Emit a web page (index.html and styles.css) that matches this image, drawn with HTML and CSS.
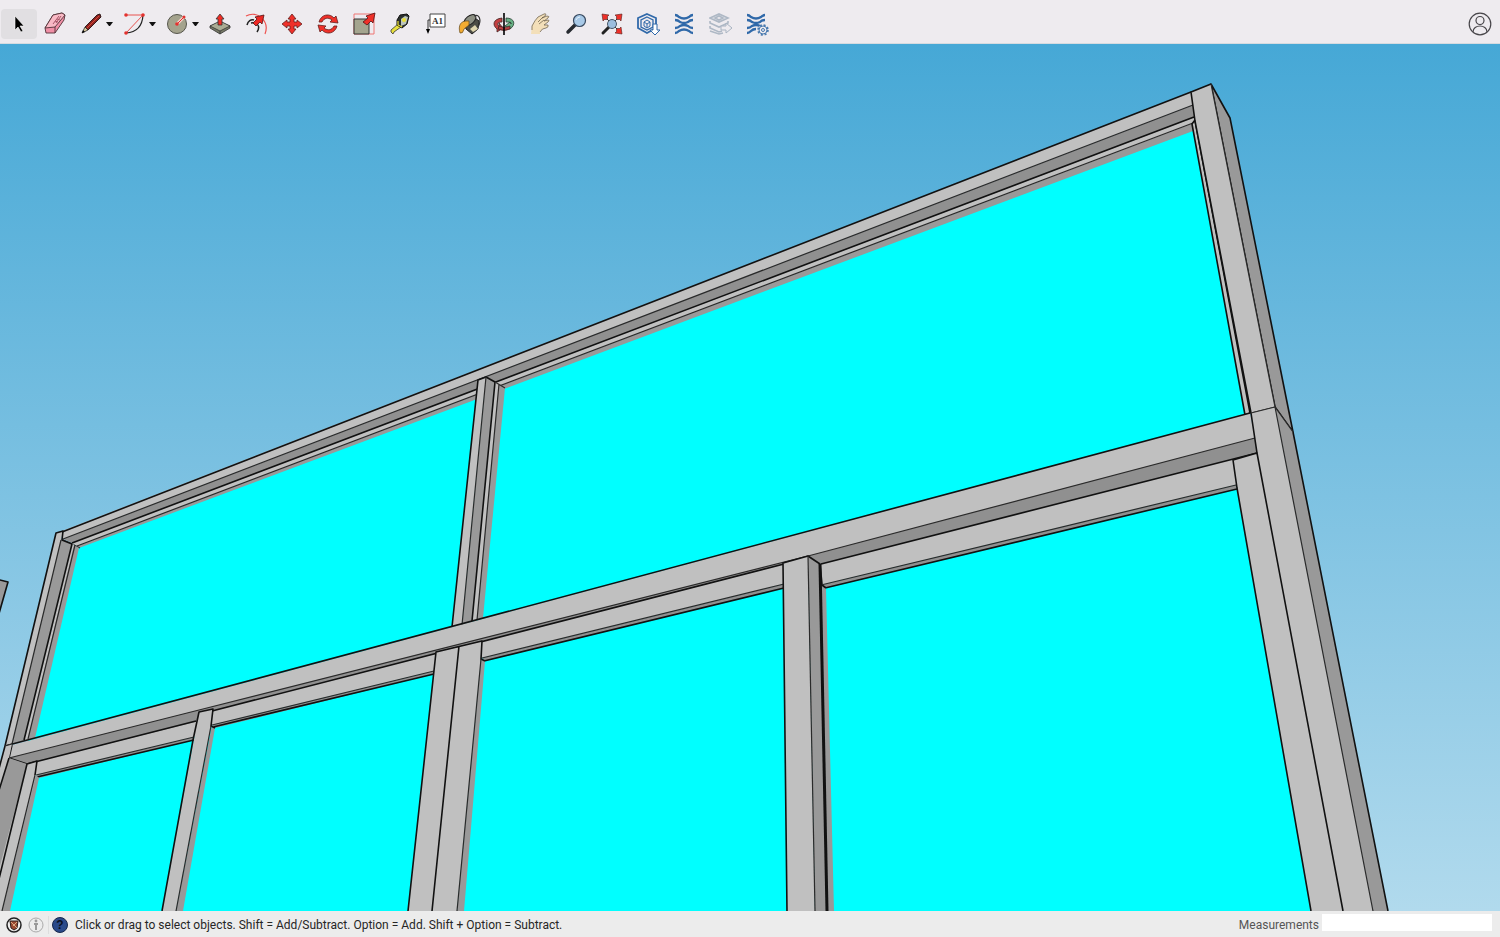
FILE: index.html
```html
<!DOCTYPE html>
<html lang="en">
<head>
    <meta charset="UTF-8">
    <meta name="viewport" content="width=device-width, initial-scale=1.0">
    <title>Model viewer</title>
    <link rel="stylesheet" href="styles.css">
</head>
<body>
    <header class="toolbar">
        <button class="tool active" aria-label="Select">
            <svg viewBox="0 0 24 24"><path d="M8 4v14l3-3 3 5 2-1-3-5h4z" fill="#000" stroke="#fff" stroke-width=".6"/></svg>
        </button>
        <button class="tool" aria-label="Eraser">
            <svg viewBox="0 0 24 24"><g stroke="#503238" stroke-linejoin="round" stroke-width=".9"><path d="M2 16 10 3 19 1 22 3 21 8 12 21 3 21z" fill="#f08fa6"/><path d="M2 16 12 15 22 3 19 1 10 3z" fill="#f9b9c5"/><path d="M12 15v6" fill="none"/></g><path d="M10 12 16 4M13 11 18 4M12 9l3 1M14 7l3 1" stroke="#a75568"/></svg>
        </button>
        <div class="tool-group">
            <button class="tool" aria-label="Line">
                <svg viewBox="0 0 24 24"><path d="M6 15 18 3 21 2 22 5 9 18z" fill="#8e2220" stroke="#211" stroke-width=".9"/><path d="M8 16 20 4" stroke="#d64a38"/><path d="M6 15 3 21 9 18z" fill="#d9c79b" stroke="#222" stroke-width=".8"/><path d="m3 21 1-3 2 2z"/></svg>
            </button>
            <button class="caret" aria-label="Line tools"></button>
        </div>
        <div class="tool-group">
            <button class="tool" aria-label="Arc">
                <svg viewBox="0 0 24 24"><path d="M21 3Q20 20 4 21" fill="none" stroke="#222" stroke-width="1.2"/><path d="M4 3H21L4 21" fill="none" stroke="#e8524e"/><g fill="#e3312e"><circle cx="4" cy="3" r="1.800"/><circle cx="21" cy="3" r="1.800"/><circle cx="4" cy="21" r="1.800"/></g></svg>
            </button>
            <button class="caret" aria-label="Arc tools"></button>
        </div>
        <div class="tool-group">
            <button class="tool" aria-label="Circle">
                <svg viewBox="0 0 24 24"><circle cx="12" cy="12" r="9.500" fill="#a4a38d" stroke="#55554c"/><path d="m12 12 7-7" stroke="#f8d0c8" stroke-width="3"/><path d="m12 12 7-7" stroke="#d33"/><circle cx="12" cy="12" r="1.800" fill="#e3312e"/><circle cx="19" cy="5" r="1.500" fill="#e3312e"/></svg>
            </button>
            <button class="caret" aria-label="Shape tools"></button>
        </div>
        <button class="tool" aria-label="Push/Pull">
            <svg viewBox="0 0 24 24"><g stroke="#333" stroke-width=".8" stroke-linejoin="round"><path d="M2 14 12 10 22 14V16L12 22 2 16z" fill="#777966"/><path d="M2 14 12 9 22 14 12 19z" fill="#aaac94"/><path d="M12 19v3"/><path d="M12 2 16 7H14V13H10V7H8z" fill="#ef2c24"/></g></svg>
        </button>
        <button class="tool" aria-label="Offset">
            <svg viewBox="0 0 24 24"><path d="M2 4C13-2 26 9 21 22" fill="none" stroke="#ee5350" stroke-width="1.2"/><path d="M3 13C4 9 7 7 10 8M7 11C13 10 17 14 13 20" fill="none" stroke="#222" stroke-width="1.5"/><path d="M20 3 18 12 16 10 12 14 9 11 13 7 11 5z" fill="#ed2824" stroke="#511" stroke-width=".8"/></svg>
        </button>
        <button class="tool" aria-label="Move">
            <svg viewBox="0 0 24 24"><path d="m12 2 4 5h-2v3h3V8l5 4-5 4v-2h-3v3h2l-4 5-4-5h2v-3H7v2l-5-4 5-4v2h3V7H8z" fill="#ef3029" stroke="#65201d" stroke-width=".8"/></svg>
        </button>
        <button class="tool" aria-label="Rotate">
            <svg viewBox="0 0 24 24"><g fill="#ef3029" stroke="#65201d" stroke-width=".8" stroke-linejoin="round"><path d="M3 10C5 2 14 1 18 6L20 4 22 11 14 10 16 8C12 5 8 6 6 10z"/><path d="M21 14C19 22 10 23 6 18L4 20 2 13 10 14 8 16C12 19 16 18 18 14z"/></g></svg>
        </button>
        <button class="tool" aria-label="Scale">
            <svg viewBox="0 0 24 24"><path d="M2 2H22V22H2z" fill="none" stroke="#ef7775"/><path d="M2 7H17V22H2z" fill="#a4a58f" stroke="#333"/><path d="M23 1 21 11 19 9 15 13 11 10 16 6 14 4z" fill="#ef3029" stroke="#511" stroke-width=".8"/></svg>
        </button>
        <button class="tool" aria-label="Tape Measure">
            <svg viewBox="0 0 24 24"><path d="M3 18 10 12 13 15 6 20 5 22 3 20z" fill="#e7df3d" stroke="#333" stroke-width=".8"/><path d="M9 8 12 3 19 2 21 4 19 12 14 16 9 13z" fill="#2c302d" stroke="#111"/><path d="m13 7 4-3 3 1-2 7-5 2z" fill="#bcc6bc"/><circle cx="16" cy="8" r="2" fill="#e9df32"/><path d="M10 9v4l4 2" fill="none" stroke="#e9df32" stroke-width="1.2"/></svg>
        </button>
        <button class="tool" aria-label="Text">
            <svg viewBox="0 0 24 24"><path d="M6 2H21V15H6z" fill="#fff" stroke="#444"/><path d="M6 8H4V19" fill="none" stroke="#333"/><path d="M2 17H6L4 22z"/><text x="8" y="12" class="icon-text">A1</text></svg>
        </button>
        <button class="tool bucket" aria-label="Paint Bucket">
            <svg viewBox="0 0 24 24"><path d="M6 9 13 3 21 9 20 17 14 22 8 17z" fill="#4b4c45" stroke="#222"/><ellipse cx="12" cy="8" rx="4" ry="7" transform="rotate(50 12 8)" fill="#8d9083" stroke="#222"/><path d="M16 4c5-3 8 4 4 11" fill="none" stroke="#333" stroke-width="1.2"/><path d="M11 9C2 8 0 14 2 21Q5 22 6 17L11 13z" fill="#f3ac32" stroke="#644b20" stroke-width=".7"/><path d="m12 17 5-4 3 4-5 3z" fill="#ded5ad"/></svg>
        </button>
        <button class="tool" aria-label="Orbit">
            <svg viewBox="0 0 24 24"><path d="M10 6C1 7 0 13 5 17V20L11 16 7 11V14C4 12 6 10 10 10z" fill="#c34042" stroke="#422" stroke-width=".8"/><path d="M14 6C23 6 24 13 18 17L13 14 18 10 19 12C20 10 17 10 14 10z" fill="#68b185" stroke="#243e30" stroke-width=".8"/><path d="M6 17Q12 20 18 17V14Q12 17 7 14z" fill="#b83e40" stroke="#422" stroke-width=".8"/><path d="M12 1V23" stroke="#000" stroke-width="1.6"/></svg>
        </button>
        <button class="tool" aria-label="Pan">
            <svg viewBox="0 0 24 24"><path d="M3 22 4 14Q7 8 10 5L16 2Q19 1 17 4L14 6 19 4Q22 4 20 6L16 9 20 8Q22 8 20 10L16 13 20 13Q21 15 18 16 14 16 12 20V22z" fill="#f3dfb9"/><path d="M4 18V14Q7 8 10 5L16 2Q19 1 17 4L14 6 19 4Q22 4 20 6L16 9 20 8Q22 8 20 10L16 13 20 13Q21 15 18 16 14 16 12 20M10 10 15 5M11 12l5-4" fill="none" stroke="#746751" stroke-width=".8"/></svg>
        </button>
        <button class="tool" aria-label="Zoom">
            <svg viewBox="0 0 24 24"><path d="m4 20 7-7" stroke="#262a30" stroke-width="3.500" stroke-linecap="round"/><circle cx="15.500" cy="8.500" r="6" fill="#a8c9e7" stroke="#38495f" stroke-width="1.2"/><path d="M12 8q1-3 4-3" fill="none" stroke="#e3f1fb"/></svg>
        </button>
        <button class="tool" aria-label="Zoom Extents">
            <svg viewBox="0 0 24 24"><path d="m3 21 7-7" stroke="#222" stroke-width="3" stroke-linecap="round"/><path d="m5 5 14 14M19 5l-6 6" stroke="#333"/><g fill="#ee3029" stroke="#52201d" stroke-width=".6"><path d="m2 2 7 1-2 2 1 1-2 2-1-1-2 2zM22 2l-7 1 2 2-1 1 2 2 1-1 2 2zM22 22l-7-1 2-2-1-1 2-2 1 1 2-2z"/></g><circle cx="12" cy="12" r="4.500" fill="#9dbede" stroke="#4b5a69"/></svg>
        </button>
        <button class="tool" aria-label="3D Warehouse">
            <svg viewBox="0 0 24 24"><g fill="none" stroke="#3069a9"><path d="m11 2 9 4v10l-9 5-9-5V6z" stroke-width="1.800"/><path d="m11 5 6 3v7l-6 3-6-3V8z" stroke-width="1.3"/><path d="m11 8 3 2v4l-3 2-3-2v-4zM8 10l3 2 3-2M11 12v4"/></g><path d="M17 12h4v6h3l-5 5-5-5h3z" fill="#fff" stroke="#3069a9"/></svg>
        </button>
        <button class="tool" aria-label="Extension Warehouse">
            <svg viewBox="0 0 24 24"><g class="waves"><path d="M3 3Q5 3 7 5 12 8 17 5 19 3 21 3"/><path d="M3 8Q6 8 8 10 12 12 16 10 18 8 21 8"/><path d="M3 16Q6 16 8 14 12 12 16 14 18 16 21 16"/><path d="M3 21Q5 21 7 19 12 16 17 19 19 21 21 21"/></g></svg>
        </button>
        <button class="tool share" aria-label="Share Model">
            <svg viewBox="0 0 24 24"><g fill="none" stroke="#aeb8c5" stroke-width="1.600"><path d="m1 6 9-4 9 4-9 4zM6 6l4-2 4 2-4 2zM1 9v2l9 4 9-4V9M1 14v2l9 4 3-1M1 19l9 3 4-1"/></g><path d="M12 14h5v-3l6 5-6 5v-3h-5z" fill="#eeebef" stroke="#a9b4c2"/></svg>
        </button>
        <button class="tool" aria-label="Extension Manager">
            <svg viewBox="0 0 24 24"><g class="waves"><path d="M1 3Q3 3 5 5 10 8 15 5 17 3 19 3"/><path d="M1 8Q4 8 6 10 10 12 14 10 16 8 19 8"/><path d="M1 16Q4 16 6 14 10 12 14 14"/><path d="M1 21Q3 21 5 19 7 17 10 17"/></g><circle cx="17" cy="18" r="4.800" fill="#eeebef" stroke="#497aaf" stroke-width="2" stroke-dasharray="2 1.770"/><circle cx="17" cy="18" r="4" fill="#eeebef" stroke="#497aaf"/><circle cx="17" cy="18" r="1.500" fill="none" stroke="#497aaf"/></svg>
        </button>
        <button class="tool account" aria-label="Account">
            <svg viewBox="0 0 24 24"><g fill="none" stroke="#474549" stroke-width="1.2"><circle cx="12" cy="12" r="10.800"/><circle cx="12" cy="8.500" r="4"/><path d="M5 20C5 12 19 12 19 20"/></g></svg>
        </button>
    </header>

    <main class="viewport">
        <svg class="model" viewBox="0 44 1500 867" preserveAspectRatio="xMidYMid slice" role="img" aria-label="Window frame model">
            <!-- glass -->
            <path class="glass" d="M72 543 1194 120 1250 414 1237 488 1311 911H5L36 775 28 740z"/>

            <!-- frame far left -->
            <path class="side edge" d="M-4 579 8 582-4 624z"/>

            <!-- top rail -->
            <path class="side" d="M72 543 1194 118 1193 131 79 548z"/>
            <path class="face" d="M72 543 1194 117 1194 123 77 546z"/>
            <path class="under" d="M63 539 1193 105 1195 117 72 543z"/>
            <path class="face" d="M62 531 1191 92 1193 105 63 539z"/>
            <path class="line" d="M62 532 1191 92M72 543 1194 117"/>
            <path class="thin" d="M63 539 1193 105M77 546 1193 123M63 540l9 4 8 4"/>

            <!-- left post, upper -->
            <path class="side" d="M61 539 72 544 79 548 35 738 12 744z"/>
            <path class="face" d="M56 533 63 531 61 540 12 744 5 746z"/>
            <path class="face" d="M72 543 74 545 28 739 24 740z"/>
            <path class="line" d="M5 746 56 533 63 531 62 540 72 544 24 740"/>
            <path class="thin" d="M61 540 12 744M75 545 28 739"/>

            <!-- centre post, upper -->
            <path class="side" d="M486 377 505 388 483 618 462 625z"/>
            <path class="face" d="M478 380 486 377 462 625 452 627z"/>
            <path class="face" d="M495 382 499 384 477 620 472 621z"/>
            <path class="line" d="M452 627 478 380 486 377 495 382 472 621"/>
            <path class="thin" d="M486 377 462 625M499 384 477 620M495 382l10 6"/>

            <!-- right post, upper -->
            <path class="face line" d="M1192 124 1195 120 1250 413 1245 415z"/>
            <path class="side line" d="M1211 84 1230 118 1293 432 1275 407z"/>
            <path class="face" d="M1191 92 1211 84 1275 407 1251 413 1195 121z"/>
            <path class="line" d="M1251 413 1195 121 1191 92 1211 84"/>
            <path class="thin" d="M1211 84 1275 407 1251 413"/>

            <!-- sub rails below the middle rail -->
            <path class="under" d="M36 775 194 737V740L39 778zM212 725 434 671V674L215 728zM482 658 784 584V588L485 661zM821 585 1236 485 1237 489 826 588z"/>
            <path class="line" d="M37 777 194 740M213 727 434 674M484 661 784 588M825 588 1237 489"/>
            <path class="face" d="M9 750 1254 425 1236 485 821 585 784 584 482 658 434 671 212 725 194 737 36 775z"/>
            <path class="thin" d="M36 775 194 737M212 725 434 671M482 658 784 584M821 585 1236 485"/>

            <!-- middle rail -->
            <path class="under" d="M9 758V750L808 545 1255 430 1257 453 821 564 808 556 784 564 212 711 199 721 27 764z"/>
            <path class="face" d="M9 746 1250 413 1255 438 808 556 199 710 9 758z"/>
            <path class="line" d="M5 746 1250 413M27 764 196 721M212 711 784 564M821 564 1257 453M12 745 9 758 27 764"/>
            <path class="thin" d="M9 758 199 710 808 556 1255 438"/>

            <!-- left post, lower -->
            <path class="face" d="M5 746 12 744 9 758-12 826V800z"/>
            <path class="side" d="M9 758 27 764-12 924V826z"/>
            <path class="face" d="M27 764 37 761 36 776 2 911H-12z"/>
            <path class="side" d="M36 775 39 778 10 911H2z"/>
            <path class="line" d="M5 746-12 810M9 758-12 826M27 764-12 924M27 764 37 761 35 775"/>
            <path class="thin" d="M35 775 2 911M5 746l7-2"/>

            <!-- narrow post -->
            <path class="side" d="M212 725 215 728 183 911H176z"/>
            <path class="face" d="M199 712 213 709 211 726 176 911H162z"/>
            <path class="line" d="M162 911 193 740 199 712 213 709 211 726 215 728"/>
            <path class="thin" d="M211 726 176 911"/>

            <!-- centre post, lower -->
            <path class="side" d="M481 658 485 661 464 911H457z"/>
            <path class="face" d="M436 652 482 641 481 659 457 911H408z"/>
            <path class="line" d="M408 911 436 652 482 641 481 659 485 661M459 646 432 911"/>
            <path class="thin" d="M481 659 457 911"/>

            <!-- wide post -->
            <path class="side" d="M808 556 821 564 823 586 826 588 834 911H815z"/>
            <path class="face" d="M783 563 808 556 815 911H787z"/>
            <path class="line" d="M787 911 783 563 808 556 820 564 822 585 826 588"/>
            <path class="thin" d="M808 556 815 911"/>
            <path class="heavy" d="M820 564 827 911"/>

            <!-- right post, lower -->
            <path class="face" d="M1233 460 1257 453 1343 911H1311L1237 488z"/>
            <path class="face" d="M1251 413 1275 407 1373 911H1343L1257 453z"/>
            <path class="side" d="M1275 407 1293 432 1388 911H1373z"/>
            <path class="line" d="M1311 911 1237 488 1233 460 1257 453M1251 413 1257 453 1343 911M1293 432 1388 911"/>
            <path class="thin" d="M1251 413 1275 407 1373 911M1275 407l18 25"/>
        </svg>
    </main>

    <footer class="statusbar">
        <button class="status-button" aria-label="Geo-location">
            <svg viewBox="0 0 16 16"><circle cx="8" cy="8" r="7" fill="#eee" stroke="#222" stroke-width="1.500"/><path d="M4 4h8l-1 7-3 2-3-2z" fill="#9b4931" stroke="#33231e"/><path d="m5 5 6 6M11 5 7 9" stroke="#d9aa82"/></svg>
        </button>
        <button class="status-button" aria-label="Credits">
            <svg viewBox="0 0 16 16"><circle cx="8" cy="8" r="7" fill="none" stroke="#aaa"/><circle cx="8" cy="4" r="1.400" fill="#999"/><path d="M6 7h4M8 6v7" stroke="#999" stroke-width="2"/></svg>
        </button>
        <span class="divider"></span>
        <button class="status-button" aria-label="Help">
            <svg viewBox="0 0 16 16"><circle cx="8" cy="8" r="7.500" fill="#2a4a8a" stroke="#17284d"/><text x="8" y="12" class="help-text">?</text></svg>
        </button>
        <p class="hint">Click or drag to select objects. Shift = Add/Subtract. Option = Add. Shift + Option = Subtract.</p>
        <label for="measurements">Measurements</label>
        <input type="text" id="measurements">
    </footer>
</body>
</html>
```
FILE: styles.css
```css
:root {
    --bar-color: #eeebef;
    --status-color: #ececec;
    --face-color: #c0c0c0;
    --side-color: #999;
    --under-color: #909090;
}

* {
    box-sizing: border-box;
    margin: 0;
    padding: 0;
}

body {
    display: flex;
    flex-direction: column;
    height: 100vh;
    overflow: hidden;
    font-family: Roboto, "Liberation Sans", sans-serif;
    font-size: 12px;
    color: #262626;
}

button {
    border: none;
    background: none;
}

.toolbar {
    display: flex;
    align-items: center;
    flex-shrink: 0;
    height: 44px;
    padding: 4px 2px 0 1px;
    background-color: var(--bar-color);
    border-bottom: 1px solid #d5dbe0;
}

.tool {
    display: flex;
    align-items: center;
    justify-content: center;
    width: 36px;
    height: 30px;
    border-radius: 4px;
}

.tool.active {
    background-color: #e1dfe2;
}

.tool svg {
    width: 24px;
    height: 24px;
}

.tool-group {
    display: flex;
    align-items: center;
    padding: 0 3px;
}

.tool-group .tool {
    width: 30px;
}

.caret {
    width: 7px;
    height: 30px;
}

.caret::before {
    content: "";
    display: block;
    border: 3px solid transparent;
    border-top: 4px solid #111;
    border-bottom: none;
}

.bucket {
    width: 32px;
}

.share {
    width: 38px;
}

.account {
    margin-left: auto;
}

.icon-text {
    font: bold 9px "Liberation Serif", serif;
    fill: #333;
}

.waves {
    fill: none;
    stroke: #3069a9;
    stroke-width: 2.4;
}

.viewport {
    flex: 1;
    min-height: 0;
    background: linear-gradient(#46a8d6, #b1daed);
}

.model {
    display: block;
    width: 100%;
    height: 100%;
}

.glass {
    fill: #0ff;
}

.face {
    fill: var(--face-color);
}

.side {
    fill: var(--side-color);
}

.under {
    fill: var(--under-color);
}

.line,
.thin,
.heavy,
.edge {
    stroke: #111;
    stroke-width: 1.6;
    stroke-linejoin: round;
}

.line:not(.face):not(.side),
.thin,
.heavy {
    fill: none;
}

.thin {
    stroke: #2a2a2a;
    stroke-width: 1.2;
}

.heavy {
    stroke-width: 3;
}

.statusbar {
    display: flex;
    align-items: center;
    flex-shrink: 0;
    height: 26px;
    padding: 1px 8px 0 3px;
    background-color: var(--status-color);
}

.status-button {
    width: 16px;
    height: 16px;
    margin: 0 3px;
}

.status-button svg {
    display: block;
    width: 16px;
    height: 16px;
}

.divider {
    width: 1px;
    height: 18px;
    margin-left: 1px;
    background-color: #ddd;
}

.help-text {
    font: bold 12px "Liberation Sans", sans-serif;
    text-anchor: middle;
    fill: #0b1020;
}

.hint {
    flex: 1;
    padding-left: 4px;
    white-space: nowrap;
}

.statusbar label {
    margin-right: 3px;
    color: #555;
}

.statusbar input {
    width: 170px;
    height: 17px;
    margin-bottom: 5px;
    border: none;
    background-color: #fff;
}
```
